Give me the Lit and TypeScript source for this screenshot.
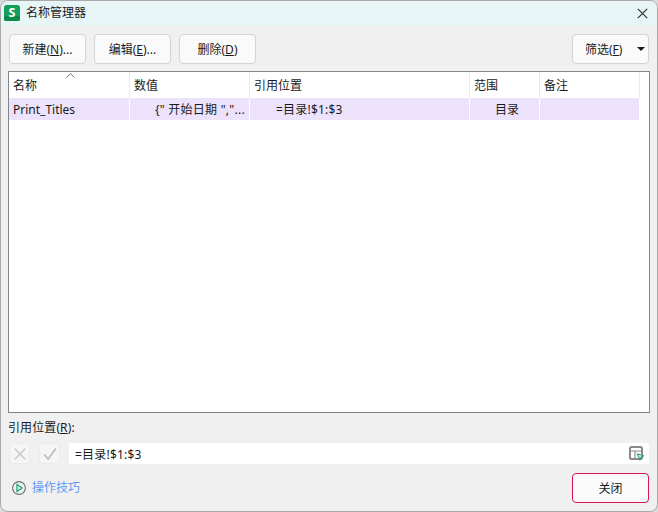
import { LitElement, html, css } from "lit";
import { customElement } from "lit/decorators.js";

@customElement("app-root")
export class AppRoot extends LitElement {
  static styles = css`
    :host { display: block; width: 658px; height: 512px; background: #dcdadc; font-family: "Noto Sans", "Noto Sans CJK SC", sans-serif; font-size: 12px; color: #1a1a1a; }
    .win { box-sizing: border-box; width: 658px; height: 512px; border: 1px solid #a9a9a9; border-radius: 8px; background: #f0f0f0; overflow: hidden; display: flex; flex-direction: column; }
    .title { height: 25px; background: #e8f5f7; display: flex; align-items: center; padding: 0 9px 0 3px; gap: 6px; flex: none; }
    .title .t { flex: 1; line-height: 25px; position: relative; top: -1px; }
    .logo { width: 16px; height: 16px; margin-top: -1px; }
    .close { width: 11px; height: 11px; }
    .toolbar { display: flex; gap: 8px; padding: 8px 8px 7px 8px; flex: none; }
    .btn { box-sizing: border-box; width: 77px; height: 30px; background: #fafafa; border: 1px solid #d3d3d3; border-radius: 4px; display: flex; align-items: center; justify-content: center; }
    .filter { margin-left: auto; justify-content: flex-start; padding-left: 12px; position: relative; }
    .caret { position: absolute; right: 3px; top: 12px; width: 0; height: 0; border-left: 4px solid transparent; border-right: 4px solid transparent; border-top: 4px solid #1a1a1a; }
    u { text-underline-offset: 1px; }
    .table { box-sizing: border-box; margin: 0 7px; height: 342px; flex: none; background: #fff; border: 1px solid #85858d; position: relative; }
    .grid { display: grid; grid-template-columns: 121px 120px 220px 70px 100px; }
    .h { height: 26px; line-height: 27px; padding-left: 4px; box-sizing: border-box; border-right: 1px solid #e9e9e9; }
    .c { height: 22px; line-height: 23px; background: #ede2fb; box-sizing: border-box; border-right: 1px solid #fff; white-space: nowrap; overflow: hidden; }
    .c1 { padding-left: 4px; }
    .c2 { padding-left: 25px; letter-spacing: 0.25px; }
    .c3 { padding-left: 26px; letter-spacing: 0.2px; }
    .c4 { padding-left: 25px; }
    .sort { position: absolute; left: 57px; top: 1px; width: 9px; height: 5px; }
    .label { height: 30px; box-sizing: border-box; padding: 0 0 2px 7px; display: flex; align-items: center; flex: none; letter-spacing: 0.1px; }
    .refrow { display: flex; align-items: center; padding: 0 8px 0 8px; gap: 9px; flex: none; height: 21px; }
    .sq { box-sizing: border-box; width: 21px; height: 21px; background: #f5f5f5; border: 1px solid #ebebeb; border-radius: 3px; display: flex; align-items: center; justify-content: center; }
    .sq svg { width: 14px; height: 14px; }
    .input { flex: 1; height: 21px; background: #fff; display: flex; align-items: center; justify-content: space-between; padding: 0 5px 0 6px; }
    .input span { letter-spacing: 0.2px; }
    .input svg { width: 15px; height: 15px; }
    .foot { display: flex; align-items: center; justify-content: space-between; padding: 9px 8px 0 10px; flex: none; }
    .tips { display: flex; align-items: center; gap: 5px; color: #5c9cf5; }
    .tips span { position: relative; top: -1px; }
    .tips svg { width: 16px; height: 16px; }
    .closebtn { box-sizing: border-box; width: 77px; height: 30px; background: #fafafa; border: 1px solid #d6135f; border-radius: 4px; display: flex; align-items: center; justify-content: center; }
  `;

  render() {
    return html`
      <div class="win">
        <div class="title">
          <svg class="logo" viewBox="0 0 16 16">
            <rect width="16" height="16" rx="2.5" fill="#14a05a"/>
            <path d="M0 11h16v2.5a2.5 2.5 0 0 1-2.5 2.5H2.5A2.5 2.5 0 0 1 0 13.5Z" fill="#0d8a4b"/>
            <text x="8" y="12.4" text-anchor="middle" font-size="12.5" font-weight="700" fill="#fff" font-family="Noto Sans">S</text>
          </svg>
          <span class="t">名称管理器</span>
          <svg class="close" viewBox="0 0 11 11"><path d="M.8 .8l9.4 9.4M10.2 .8L.8 10.2" stroke="#2a2a2a" stroke-width="1.1" fill="none"/></svg>
        </div>
        <div class="toolbar">
          <div class="btn">新建(<u>N</u>)...</div>
          <div class="btn">编辑(<u>E</u>)...</div>
          <div class="btn">删除(<u>D</u>)</div>
          <div class="btn filter">筛选(<u>F</u>)<span class="caret"></span></div>
        </div>
        <div class="table">
          <svg class="sort" viewBox="0 0 9 5"><path d="M.5 4.5L4.5.7l4 3.8" stroke="#777" fill="none"/></svg>
          <div class="grid">
            <div class="h">名称</div><div class="h">数值</div><div class="h">引用位置</div><div class="h">范围</div><div class="h">备注</div>
            <div class="c c1">Print_Titles</div>
            <div class="c c2">{" 开始日期 ","...</div>
            <div class="c c3">=目录!$1:$3</div>
            <div class="c c4">目录</div>
            <div class="c"></div>
          </div>
        </div>
        <div class="label">引用位置(<u>R</u>):</div>
        <div class="refrow">
          <div class="sq"><svg viewBox="0 0 14 14"><path d="M1.8 1.8l10.4 10.4M12.2 1.8L1.8 12.2" stroke="#c8c8c8" stroke-width="1.5" fill="none"/></svg></div>
          <div class="sq"><svg viewBox="0 0 14 14"><path d="M1.2 7.5l4 4.5L12.8 1.5" stroke="#bdbdbd" stroke-width="1.8" fill="none"/></svg></div>
          <div class="input"><span>=目录!$1:$3</span>
            <svg viewBox="0 0 15 15">
              <rect x="1" y="1" width="12" height="12" rx="1.5" fill="#fff" stroke="#8a8a8a" stroke-width="2"/>
              <path d="M2 5h10M6 5v7" stroke="#8a8a8a" stroke-width="1.2" fill="none"/>
              <path d="M8.5 8l6 1.8-2.3 1.2-1.2 2.6Z" fill="#fff" stroke="#1f9d63" stroke-width="1.1"/>
            </svg>
          </div>
        </div>
        <div class="foot">
          <div class="tips">
            <svg viewBox="0 0 16 16">
              <circle cx="8" cy="8" r="6.4" fill="none" stroke="#6f6f6f" stroke-width="1.1"/>
              <path d="M6 4.6l5 3.4-5 3.4Z" fill="none" stroke="#22b07a" stroke-width="1.4"/>
            </svg>
            <span>操作技巧</span>
          </div>
          <div class="closebtn">关闭</div>
        </div>
      </div>
    `;
  }
}
